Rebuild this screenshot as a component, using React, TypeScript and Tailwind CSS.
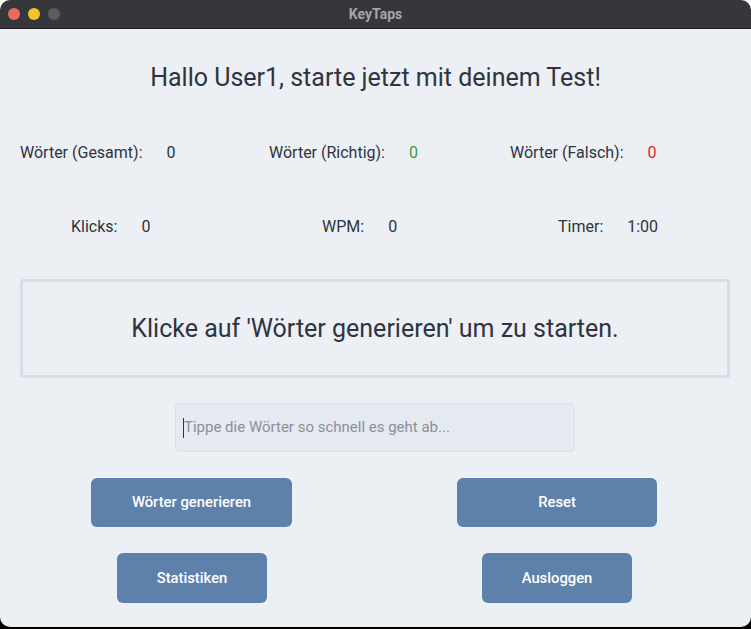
import React from "react";

const font = { fontFamily: "Roboto, 'Liberation Sans', sans-serif" };

function Stat({ label, value, color, width }: { label: string; value: string; color?: string; width?: string }) {
  return (
    <div className={`flex items-center ${width ?? ""}`}>
      <span>{label}</span>
      <span className={`ml-[24px] ${color ?? ""}`}>{value}</span>
    </div>
  );
}

function Btn({ label, width }: { label: string; width: string }) {
  return (
    <button className={`${width} h-full rounded-[6px] bg-[#5e81ac] text-[14.8px] font-medium text-white`}>
      {label}
    </button>
  );
}

export default function App() {
  return (
    <div className="h-[629px] w-[751px] bg-[linear-gradient(#ffffff_50%,#000000_50%)]" style={font}>
      <div className="flex h-[627px] w-[751px] flex-col overflow-hidden rounded-[10px] bg-[#eceff4]">
        {/* title bar */}
        <div className="relative flex h-[29px] items-center justify-center border-b border-[#1c1c1e] bg-[#36373b]">
          <div className="absolute left-[8px] top-[8px] flex gap-[8px]">
            <span className="h-[12px] w-[12px] rounded-full bg-[#ed6a5e]" />
            <span className="h-[12px] w-[12px] rounded-full bg-[#f5c12f]" />
            <span className="h-[12px] w-[12px] rounded-full bg-[#5b5c60]" />
          </div>
          <span className="text-[14px] font-bold text-[#a5a6ab]">KeyTaps</span>
        </div>

        <div className="flex flex-col text-[#2e3440]">
          <h1 className="mt-[34px] text-center text-[25px] leading-[30px]">
            Hallo User1, starte jetzt mit deinem Test!
          </h1>

          <div className="mt-[50px] flex h-[20px] pl-[20px] text-[16px]">
            <Stat label="Wörter (Gesamt):" value="0" width="w-[249px]" />
            <Stat label="Wörter (Richtig):" value="0" color="text-[#3d9a3d]" width="w-[241px]" />
            <Stat label="Wörter (Falsch):" value="0" color="text-[#e02424]" />
          </div>

          <div className="mt-[54px] flex h-[20px] pl-[71px] text-[16px]">
            <Stat label="Klicks:" value="0" width="w-[251px]" />
            <Stat label="WPM:" value="0" width="w-[236px]" />
            <Stat label="Timer:" value="1:00" />
          </div>

          <div className="ml-[20px] mt-[42px] flex h-[99px] w-[710px] items-center justify-center rounded-[3px] border-[3px] border-[#d8dee9]">
            <span className="text-[25px]">Klicke auf 'Wörter generieren' um zu starten.</span>
          </div>

          <div className="ml-[175px] mt-[25px] flex h-[49px] w-[400px] items-center rounded-[4px] border border-[#dce1ea] bg-[#e5e9f0] pl-[7px]">
            <span className="h-[20px] w-px bg-[#2e3440]" />
            <span className="text-[15px] text-[#8b9099]">Tippe die Wörter so schnell es geht ab...</span>
          </div>

          <div className="mt-[26px] flex h-[49px] gap-[165px] pl-[91px]">
            <Btn label="Wörter generieren" width="w-[201px]" />
            <Btn label="Reset" width="w-[200px]" />
          </div>

          <div className="mt-[26px] flex h-[50px] gap-[215px] pl-[117px]">
            <Btn label="Statistiken" width="w-[150px]" />
            <Btn label="Ausloggen" width="w-[150px]" />
          </div>
        </div>
      </div>
    </div>
  );
}
